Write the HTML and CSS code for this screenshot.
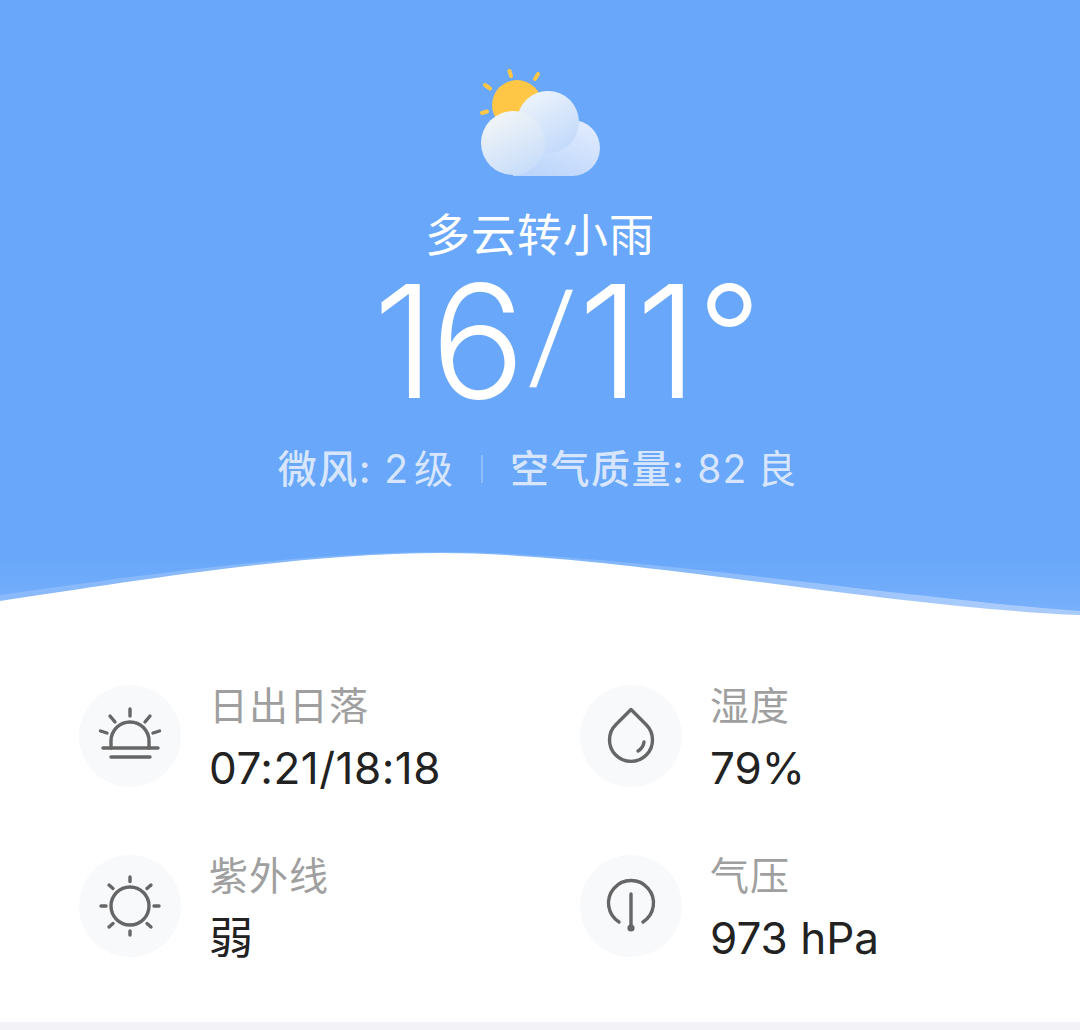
FILE: index.html
```html
<!DOCTYPE html>
<html>
  <head>
    <meta charset="utf-8" />
    <title>天气</title>
    <link rel="stylesheet" href="styles.css">
  </head>
  <body>
    <div class="hero">
      <svg class="weather-icon" width="130" height="120" viewBox="0 0 130 120">
        <defs>
          <linearGradient id="cloudRight" gradientUnits="userSpaceOnUse" x1="90" y1="53" x2="70" y2="110">
            <stop offset="0" stop-color="#dfeafe"/>
            <stop offset="1" stop-color="#bdd6fb"/>
          </linearGradient>
          <linearGradient id="cloudBack" x1="0.2" y1="0" x2="0.8" y2="1">
            <stop offset="0" stop-color="#eef4fb"/>
            <stop offset="1" stop-color="#c0d8fb"/>
          </linearGradient>
          <linearGradient id="cloudFront" x1="0.25" y1="0" x2="0.75" y2="1">
            <stop offset="0" stop-color="#f3f6f6"/>
            <stop offset="1" stop-color="#c6dcfb"/>
          </linearGradient>
        </defs>
        <circle cx="42" cy="39" r="25" fill="#ffc745"/>
        <g stroke="#ffc745" stroke-width="4" stroke-linecap="round">
          <path d="M34.500 5l1.500 5"/>
          <path d="M63 8l-3 5"/>
          <path d="M10 19l5 3.500"/>
          <path d="M7 47l5-1.500"/>
        </g>
        <path d="M38 110V81h31a28 28 0 1 1 28 29z" fill="url(#cloudRight)"/>
        <circle cx="73" cy="56" r="31" fill="url(#cloudBack)"/>
        <circle cx="38" cy="77" r="32" fill="url(#cloudFront)"/>
      </svg>
      <div class="condition">多云转小雨</div>
      <div class="temp">16<span class="temp-slash">/</span>11<span class="temp-degree">°</span></div>
      <div class="meta">
        <span class="meta-strong">微风:</span>
        <span class="meta-value meta-wind">2 级</span>
        <span class="meta-sep"></span>
        <span class="meta-strong">空气质量:</span>
        <span class="meta-value">82 良</span>
      </div>
      <svg class="wave" width="1080" height="90" viewBox="0 0 1080 90">
        <defs>
          <linearGradient id="waveShade" x1="0" y1="0" x2="0" y2="1">
            <stop offset="0.3" stop-color="#68a7fa"/>
            <stop offset="1" stop-color="#7ab1fb"/>
          </linearGradient>
          <linearGradient id="waveBand" x1="0" y1="0" x2="1" y2="0">
            <stop offset="0" stop-color="#8abafb"/>
            <stop offset="0.55" stop-color="#80b5fb"/>
            <stop offset="0.9" stop-color="#a9cbfc"/>
          </linearGradient>
        </defs>
        <path d="M0 0H1080V90H0Z" fill="url(#waveShade)"/>
        <path d="M0 65C130 47 300 22 440 22C620 22 880 66 1080 81V90H0Z" fill="url(#waveBand)"/>
        <path d="M0 71C130 52 300 23 440 23C620 23 880 77 1080 85V90H0Z" fill="#fff"/>
      </svg>
    </div>
    <div class="stats">
      <div class="stat">
        <div class="stat-icon">
          <svg width="64" height="64" viewBox="0 0 64 64" fill="none" stroke="#666" stroke-width="3.400" stroke-linecap="round">
            <path d="M13 44V37a19 19 0 0 1 38 0V44"/>
            <path d="M5 44h55"/>
            <path d="M13 53h39"/>
            <path d="M32 5v7"/>
            <path d="M12 12l5 6"/>
            <path d="M52 12l-5 6"/>
            <path d="M2.500 27l6.500 2"/>
            <path d="M61.500 27l-6.500 2"/>
          </svg>
        </div>
        <div class="stat-text">
          <div class="stat-label">日出日落</div>
          <div class="stat-value stat-time">07:21/18:18</div>
        </div>
      </div>
      <div class="stat">
        <div class="stat-icon">
          <svg width="64" height="64" viewBox="0 0 64 64" fill="none" stroke="#666" stroke-width="3.400" stroke-linecap="round" stroke-linejoin="round">
            <path d="M32 5.500L17 20.500a21.500 21.500 0 1 0 30 0z"/>
            <path d="M45 38c-0.500 4-2.500 7-6 9"/>
          </svg>
        </div>
        <div class="stat-text">
          <div class="stat-label">湿度</div>
          <div class="stat-value">79%</div>
        </div>
      </div>
      <div class="stat">
        <div class="stat-icon">
          <svg width="64" height="64" viewBox="0 0 64 64" fill="none" stroke="#666" stroke-width="3.400" stroke-linecap="round">
            <circle cx="32" cy="32" r="19"/>
            <path d="M32 3v4.500"/>
            <path d="M32 57v4"/>
            <path d="M3 32h5"/>
            <path d="M56 32h5"/>
            <path d="M11 11l4 3.500"/>
            <path d="M53 11l-4 3.500"/>
            <path d="M11 53l4-3.500"/>
            <path d="M53 53l-4-3.500"/>
          </svg>
        </div>
        <div class="stat-text">
          <div class="stat-label">紫外线</div>
          <div class="stat-value">弱</div>
        </div>
      </div>
      <div class="stat">
        <div class="stat-icon">
          <svg width="64" height="64" viewBox="0 0 64 64" fill="none" stroke="#666" stroke-width="3.400" stroke-linecap="round">
            <path d="M20 48a22.500 22.500 0 1 1 24 0"/>
            <path d="M32 20v34"/>
            <circle cx="32" cy="54" r="3.600" fill="#666" stroke="none"/>
          </svg>
        </div>
        <div class="stat-text">
          <div class="stat-label">气压</div>
          <div class="stat-value">973 hPa</div>
        </div>
      </div>
    </div>
    <div class="footer-strip"></div>
  </body>
</html>
```

FILE: styles.css
```css
html, body {
  margin: 0;
  padding: 0;
}
body {
  width: 1080px;
  height: 1030px;
  overflow: hidden;
  background: #fff;
  font-family: Inter, "Noto Sans CJK SC", sans-serif;
  position: relative;
}
.hero {
  background: #68a7fa;
  height: 620px;
  display: flex;
  flex-direction: column;
  align-items: center;
  padding-top: 66px;
  box-sizing: border-box;
  position: relative;
}
.weather-icon {
  display: block;
}
.condition {
  margin-top: 20px;
  font-size: 45px;
  line-height: 60px;
  letter-spacing: 1px;
  color: #fff;
  font-weight: 400;
}
.temp {
  margin-top: -4px;
  margin-left: 50px;
  font-size: 157px;
  font-weight: 280;
  line-height: 158px;
  color: #fff;
  letter-spacing: -4px;
}
.temp-slash {
  display: inline-block;
  font-size: 112px;
  line-height: 0;
  vertical-align: 23px;
  margin: 0 11px;
  transform: skewX(-6deg);
}
.temp-degree {
  font-size: 139px;
  line-height: 0;
  vertical-align: 13px;
  margin-left: 4px;
}
.meta {
  margin-top: 19px;
  margin-left: -5px;
  font-size: 39px;
  line-height: 60px;
  letter-spacing: 1px;
  color: #d7e6fd;
  display: flex;
  gap: 12px;
  align-items: center;
}
.meta-strong {
  font-weight: 500;
  letter-spacing: 1.500px;
}
.meta-value {
  word-spacing: -2px;
}
.meta-wind {
  word-spacing: -7px;
}
.meta-sep {
  width: 2px;
  height: 28px;
  background: #8fbefb;
  margin: 0 15px;
}
.wave {
  position: absolute;
  left: 0;
  bottom: 0;
  display: block;
}
.stats {
  display: grid;
  grid-template-columns: 501px 1fr;
  grid-auto-rows: 170px;
  padding: 65px 0 0 79px;
}
.stat {
  display: flex;
  gap: 28px;
  align-items: flex-start;
}
.stat-text {
  margin-top: -4px;
}
.stat-icon {
  width: 102px;
  height: 102px;
  border-radius: 50%;
  background: #f8f9fb;
  display: flex;
  align-items: center;
  justify-content: center;
  flex: none;
}
.stat-label {
  font-size: 39px;
  line-height: 50px;
  color: #9f9f9f;
  letter-spacing: 1px;
}
.stat-value {
  margin-top: 7px;
  font-size: 44px;
  line-height: 60px;
  color: #222;
}
.stat-time {
  letter-spacing: 0.500px;
}
.footer-strip {
  position: absolute;
  left: 0;
  top: 1022px;
  width: 1080px;
  height: 8px;
  background: #f2f2f7;
}
```
